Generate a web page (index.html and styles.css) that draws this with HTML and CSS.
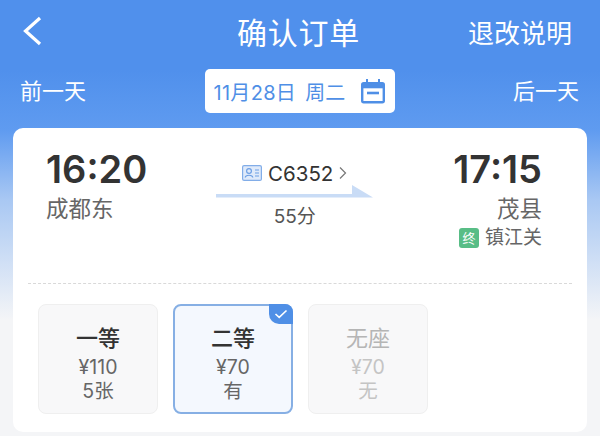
FILE: index.html
```html
<!DOCTYPE html>
<html lang="zh-CN">
<head>
  <meta charset="UTF-8">
  <title>确认订单</title>
  <link rel="stylesheet" href="styles.css">
</head>
<body>

<div class="page">
  <header class="topbar">
    <svg class="back" width="20" height="30" viewBox="0 0 20 30"><path d="M18 2 L3.5 15 L18 28" fill="none" stroke="#fff" stroke-width="3.2"/></svg>
    <h1 class="title">确认订单</h1>
    <span class="rules">退改说明</span>
  </header>

  <div class="datebar">
    <span class="day-link">前一天</span>
    <div class="date-pill">
      <span class="date-text">11月28日</span>
      <span>周二</span>
      <svg class="cal" width="26" height="26" viewBox="0 0 26 26">
        <rect x="2.2" y="5.2" width="21.6" height="19" rx="1.5" fill="none" stroke="#4f8fe6" stroke-width="2.4"/>
        <path d="M2 8 H24" stroke="#4f8fe6" stroke-width="4.6"/>
        <path d="M7 1 V6 M19 1 V6" stroke="#4f8fe6" stroke-width="2"/>
        <path d="M7 15 H19" stroke="#4f8fe6" stroke-width="2.6"/>
      </svg>
    </div>
    <span class="day-link">后一天</span>
  </div>

  <main class="card">
    <section class="trip">
      <div class="stop">
        <div class="time">16:20</div>
        <div class="station">成都东</div>
      </div>

      <div class="train">
        <div class="train-no">
          <svg width="20" height="16" viewBox="0 0 20 16">
            <rect x="0.6" y="0.6" width="18.8" height="14.8" rx="1.5" fill="#dfeafa" stroke="#82ade8" stroke-width="1.2"/>
            <circle cx="7" cy="6" r="2.4" fill="none" stroke="#6d9fe4" stroke-width="1.2"/>
            <path d="M3.2 12.5 C3.6 9.5 10.4 9.5 10.8 12.5" fill="none" stroke="#6d9fe4" stroke-width="1.2"/>
            <path d="M13 5 H17 M13 8 H17 M13 11 H17" stroke="#6d9fe4" stroke-width="1"/>
          </svg>
          <span>C6352</span>
          <svg width="8" height="14" viewBox="0 0 8 14"><path d="M1 1.5 L6.5 7 L1 12.5" fill="none" stroke="#777" stroke-width="1.2"/></svg>
        </div>
        <svg class="arrow" width="157" height="13" viewBox="0 0 157 13"><path d="M0 9 H136 V0 L157 12.5 H0 Z" fill="#c9dcf6"/></svg>
        <div class="duration">55分</div>
      </div>

      <div class="stop stop-end">
        <div class="time">17:15</div>
        <div class="station">茂县</div>
        <div class="terminal"><span class="badge">终</span>镇江关</div>
      </div>
    </section>

    <hr class="divider">

    <section class="seats">
      <div class="seat">
        <div class="seat-name">一等</div>
        <div class="seat-info">¥110</div>
        <div class="seat-info">5张</div>
      </div>
      <div class="seat seat-selected">
        <span class="tick">
          <svg width="14" height="10" viewBox="0 0 14 10"><path d="M1.5 5 L5.2 8.4 L12.5 1.5" fill="none" stroke="#fff" stroke-width="1.6"/></svg>
        </span>
        <div class="seat-name">二等</div>
        <div class="seat-info">¥70</div>
        <div class="seat-info">有</div>
      </div>
      <div class="seat seat-off">
        <div class="seat-name">无座</div>
        <div class="seat-info">¥70</div>
        <div class="seat-info">无</div>
      </div>
    </section>
  </main>
</div>

</body>
</html>
```

FILE: styles.css
```css
html, body {
  margin: 0;
  padding: 0;
}
body {
  width: 600px;
  height: 436px;
  overflow: hidden;
  font-family: Inter, "Noto Sans CJK SC", sans-serif;
  background: #f4f5f7;
}
.page {
  height: 436px;
  padding: 0 13px;
  width: 574px;
  background: linear-gradient(to bottom, #5090ec 0, #5090ec 70px, #5f9bf0 130px, #a9c8f3 200px, #f4f5f7 320px);
}
.topbar {
  display: grid;
  grid-template-columns: 1fr auto 1fr;
  align-items: center;
  height: 62px;
  padding: 0 15px 0 12px;
  color: #fff;
}
.back {
  display: block;
  margin-left: -3px;
}
.title {
  margin: 0;
  font-size: 30px;
  font-weight: 400;
  letter-spacing: 0.7px;
}
.rules {
  justify-self: end;
  font-size: 26px;
}
.datebar {
  display: flex;
  align-items: center;
  justify-content: space-between;
  height: 44px;
  margin-top: 7px;
  padding: 0 8px 4px 7px;
  color: #fff;
  box-sizing: border-box;
}
.day-link {
  font-size: 22px;
}
.date-pill {
  display: flex;
  align-items: center;
  width: 190px;
  height: 44px;
  margin-bottom: -4px;
  padding: 0 0 0 9px;
  box-sizing: border-box;
  background: #fff;
  border-radius: 5px;
  color: #4f8fe6;
  font-size: 20px;
}
.date-text {
  margin-right: 9px;
  letter-spacing: 0.3px;
}
.cal {
  margin-left: 15px;
}
.card {
  height: 304px;
  margin-top: 15px;
  background: #fff;
  border-radius: 10px;
}
.trip {
  display: flex;
  justify-content: space-between;
  height: 155px;
  padding: 17px 45px 0 33px;
  box-sizing: border-box;
}
.time {
  font-size: 38px;
  font-weight: 600;
  line-height: 48px;
  color: #333;
}
.station {
  font-size: 22.5px;
  line-height: 30px;
  margin-top: 1px;
  color: #666;
}
.stop-end {
  text-align: right;
}
.terminal {
  display: flex;
  align-items: center;
  justify-content: flex-end;
  gap: 6px;
  font-size: 19px;
  line-height: 28px;
  color: #666;
}
.badge {
  width: 20px;
  height: 20px;
  border-radius: 3px;
  background: #58bd86;
  color: #fff;
  font-size: 13px;
  line-height: 20px;
  text-align: center;
}
.train {
  display: flex;
  flex-direction: column;
  align-items: center;
  margin-right: 11px;
}
.train-no {
  display: flex;
  align-items: center;
  gap: 6px;
  height: 26px;
  margin-top: 15px;
  font-size: 20.5px;
  font-weight: 400;
  color: #333;
}
.arrow {
  display: block;
  margin-top: -1px;
}
.duration {
  margin-top: 5px;
  font-size: 19px;
  line-height: 28px;
  color: #555;
}
.divider {
  margin: 0 15px;
  border: none;
  border-top: 1px dashed #d9d9d9;
}
.seats {
  display: flex;
  gap: 15px;
  padding: 20px 25px 0;
}
.seat {
  position: relative;
  width: 120px;
  height: 110px;
  box-sizing: border-box;
  padding-top: 16px;
  background: #f8f8f9;
  border: 1px solid #efefef;
  border-radius: 8px;
  text-align: center;
  color: #666;
}
.seat-name {
  font-size: 22px;
  font-weight: 500;
  line-height: 34px;
  color: #333;
}
.seat-info {
  font-size: 19.5px;
  line-height: 24px;
}
.seat-selected {
  background: #f4f8fe;
  border: 2px solid #86afe4;
  padding-top: 15px;
}
.tick {
  position: absolute;
  top: -2px;
  right: -2px;
  display: flex;
  align-items: center;
  justify-content: center;
  width: 24px;
  height: 20px;
  background: #4f8fe6;
  border-top-right-radius: 8px;
  border-bottom-left-radius: 10px;
}
.seat-off {
  color: #c4c4c4;
}
.seat-off .seat-name {
  color: #b5b5b5;
  font-weight: 400;
}
```
